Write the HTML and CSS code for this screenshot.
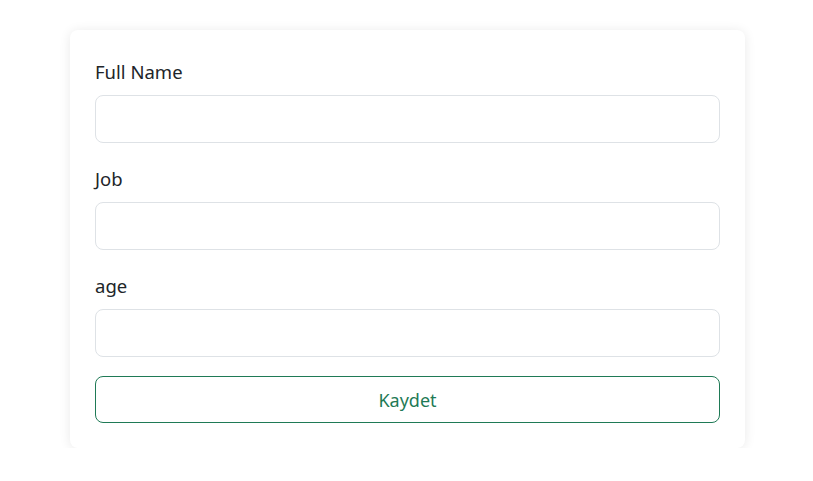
FILE: index.html
```html
<!DOCTYPE html>
<html>
<head>
<meta charset="utf-8">
<link rel="stylesheet" href="styles.css">
</head>
<body>
<div class="page">
  <form class="card">
    <div class="field">
      <label class="label">Full Name</label>
      <input class="input" type="text">
    </div>
    <div class="field">
      <label class="label">Job</label>
      <input class="input" type="text">
    </div>
    <div class="field last">
      <label class="label">age</label>
      <input class="input" type="text">
    </div>
    <button class="btn" type="button">Kaydet</button>
  </form>
</div>
</body>
</html>
```

FILE: styles.css
```css
* { box-sizing: border-box; }
html, body { margin: 0; padding: 0; background: #fff; }
body {
  font-family: "Noto Sans", "Open Sans", sans-serif;
  color: #212529;
}
.page {
  padding: 30px 0 0 70px;
}
.card {
  width: 675px;
  background: #fff;
  border-radius: 8px;
  box-shadow: 0 1px 12px rgba(0,0,0,0.09);
  padding: 28px 25px 25px;
  display: flex;
  flex-direction: column;
}
.field {
  display: flex;
  flex-direction: column;
  margin-bottom: 22px;
}
.field.last { margin-bottom: 19px; }
.label {
  font-size: 18.5px;
  line-height: 27px;
  margin-bottom: 10px;
}
.input {
  height: 48px;
  border: 1px solid #dee2e6;
  border-radius: 8px;
  font-size: 18px;
  padding: 8px 16px;
  font-family: inherit;
}
.btn {
  height: 47px;
  border: 1px solid #1f7a56;
  border-radius: 8px;
  background: #fff;
  color: #1f7a56;
  font-family: inherit;
  font-size: 18px;
  padding: 0;
}
```
